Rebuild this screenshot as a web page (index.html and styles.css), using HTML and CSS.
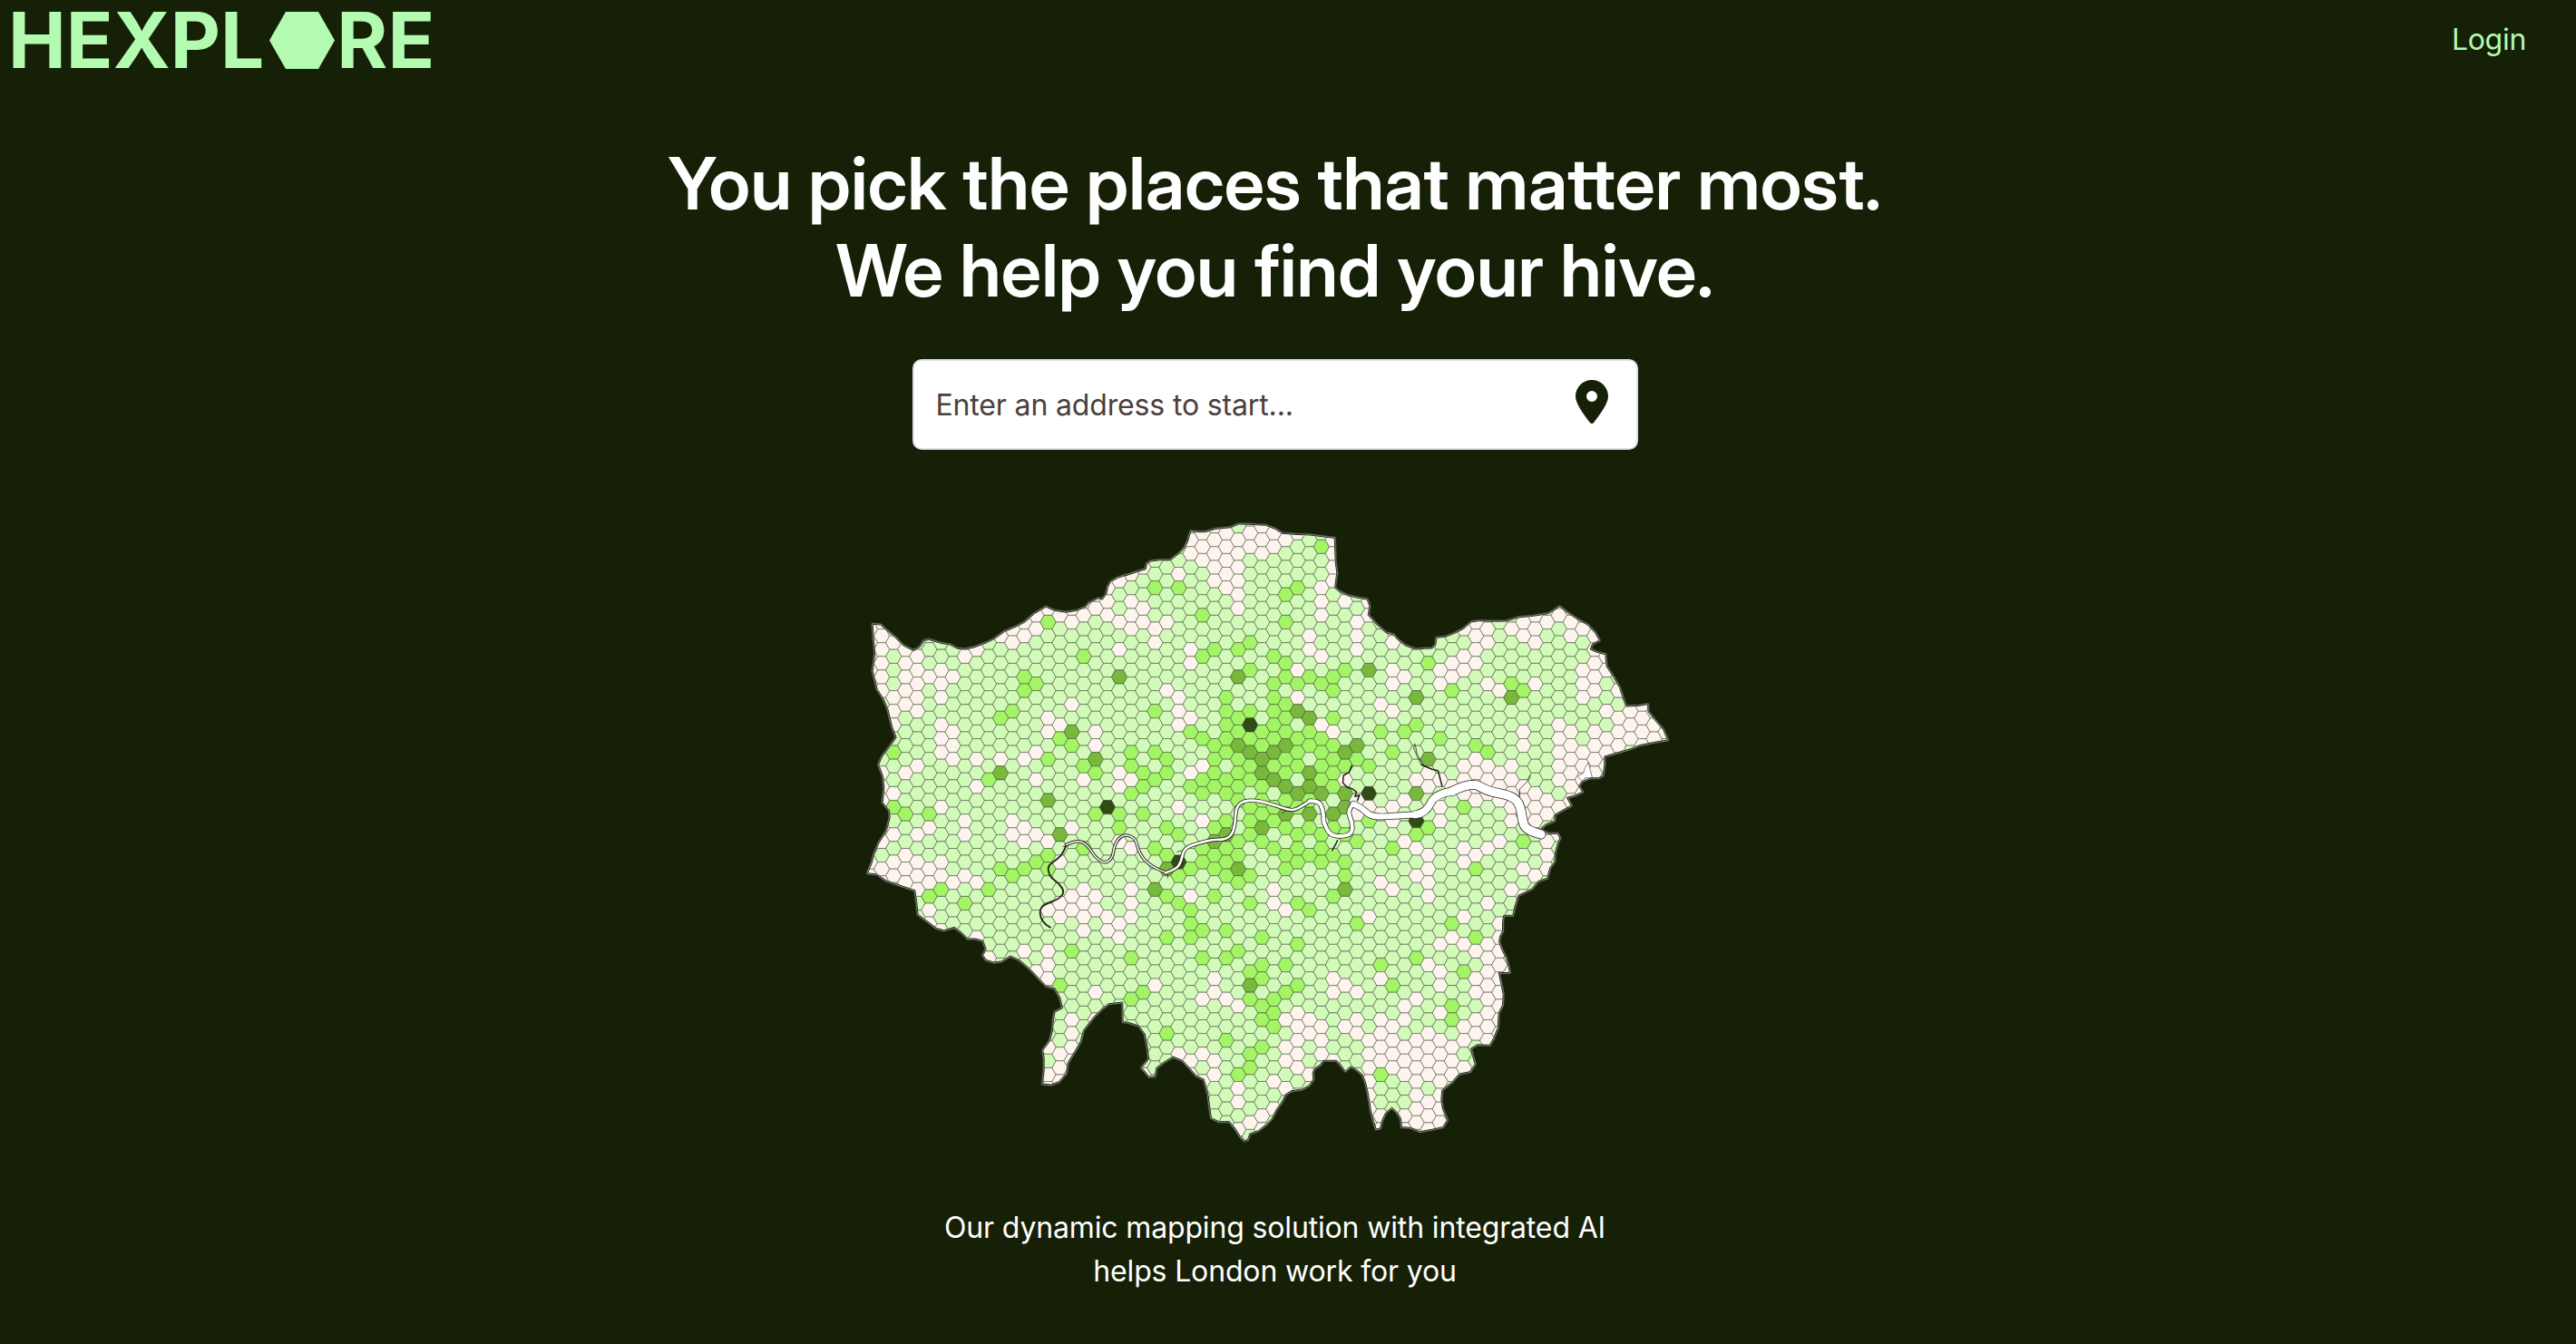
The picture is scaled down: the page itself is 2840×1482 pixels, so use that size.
FILE: index.html
```
<!DOCTYPE html>
<html lang="en">
<head>
<meta charset="utf-8">
<title>Hexplore</title>
<link rel="stylesheet" href="styles.css">
</head>
<body>
<header class="navbar">
  <a class="logo" aria-label="Hexplore"><span>HEXPL</span><svg class="logo-hex" viewBox="0 0 72 63"><path d="M18 0H54L72 31.5L54 63H18L0 31.5Z"/></svg><span>RE</span></a>
  <a class="login">Login</a>
</header>
<main class="hero">
  <h1 class="headline"><span>You pick the places that matter most.</span><span class="second">We help you find your hive.</span></h1>
  <div class="search">
    <span class="placeholder">Enter an address to start...</span>
    <svg class="pin" viewBox="0 0 36 48"><path fill-rule="evenodd" d="M18 0C8 0 0 8 0 18C0 26.5 11 40.500 15.800 46.900A2.800 2.800 0 0 0 20.200 46.900C25 40.500 36 26.500 36 18C36 8 28 0 18 0ZM18 12A6 6 0 1 1 18 24A6 6 0 1 1 18 12Z"/></svg>
  </div>
  <svg class="map" id="map" viewBox="950.5 560 910 710"></svg>
  <p class="tagline"><span>Our dynamic mapping solution with integrated AI</span><span class="second">helps London work for you</span></p>
</main>
<script src="map.js"></script>
</body>
</html>
```
FILE: styles.css
```
* { box-sizing: border-box; }
body {
  margin: 0;
  width: 2811px;
  height: 1482px;
  overflow: hidden;
  background: #162006;
  color: #fff;
  font-family: Inter, "Liberation Sans", sans-serif;
}
html { background: #162006; overflow: hidden; }
.navbar {
  display: flex;
  justify-content: space-between;
  align-items: center;
  height: 88px;
  padding: 0 26px 0 9px;
  color: #b2fbb1;
}
.logo {
  display: flex;
  align-items: center;
  font-size: 85.4px;
  line-height: 104px;
  font-weight: 700;
}
.logo-hex { width: 72px; height: 63px; margin: 0 2px 0 6px; fill: #b2fbb1; }
.login { font-size: 32px; line-height: 48px; letter-spacing: -.3px; }
.hero { display: flex; flex-direction: column; align-items: center; }
.headline {
  display: flex;
  flex-direction: column;
  align-items: center;
  margin: 66px 0 0;
  font-family: "Inter Display", Inter, "Liberation Sans", sans-serif;
  font-variation-settings: "opsz" 32;
  font-size: 80px;
  line-height: 96px;
  font-weight: 600;
  white-space: nowrap;
}
.search {
  display: flex;
  justify-content: space-between;
  align-items: center;
  width: 800px;
  height: 100px;
  margin-top: 50px;
  padding: 0 31px 0 24px;
  border: 2px solid #dee2e6;
  border-radius: 10px;
  background: #fff;
  color: #4a4040;
  font-size: 32px;
  letter-spacing: -.15px;
}
.pin { width: 36px; height: 48px; margin-bottom: 6px; fill: #162006; }
.map { width: 910px; height: 710px; margin-top: 64px; }
.tagline {
  display: flex;
  flex-direction: column;
  align-items: center;
  margin: 60px 0 0;
  font-size: 32px;
  line-height: 48px;
  letter-spacing: -.15px;
  white-space: nowrap;
}
.cell { stroke: #2c3a27; stroke-width: .85; stroke-opacity: .58; }
.coast { fill: #fef4ee; }
.halo { fill: none; stroke: #e9e9e2; stroke-opacity: .25; stroke-width: 3.6; stroke-linejoin: round; }
.edge { fill: none; stroke: #fff; stroke-opacity: .45; stroke-width: 1.8; stroke-linejoin: round; }
.shore { fill: none; stroke: #222820; stroke-width: 1; stroke-linejoin: round; }
.river, .bank, .creek, .brook { fill: none; stroke-linecap: round; stroke-linejoin: round; }
.river { stroke: #fff; }
.bank { stroke: #2a2424; }
.creek { stroke: #221b1b; stroke-width: 1.5; }
.brook { stroke: #221b1b; stroke-width: .9; stroke-opacity: .8; }
.marsh { fill: #fff; stroke: #555; stroke-width: .7; }
```
FILE: map.js
```
// Map sheets: origin of each sheet; sheet units are thirds of a map unit.
const SHEETS = { A: [940, 560], B: [1240, 560], C: [1540, 560], D: [940, 900], E: [1240, 900], F: [1540, 900], M: [1310, 740] };
const COLORS = { cream: '#fef4ee', pale: '#d2fab9', bright: '#a3f566', medium: '#78b93c', dark: '#2f4c14' };
const X0 = 958.5, DX = 13.1, DY = 15.12, Y0 = 572.6;

// Values per sheet: "column:y,y,y"
const DATA = [
['A','cream','55:400,446,536,582 95:378,423,469,514,559,605,877,922,968 134:400,446,627,672,718,945 173:469,514,560,605,650,877 213:491,536,582,627,673,855 252:559 291:536,582,627,718,763,809,990 331:559,741,786,832 370:491 409:469,832,922 488:423,832 527:400,446 566:423,378,832 606:355,400,809,900 645:333,695,741 684:355,718 724:333,378,650 763:310,355,900 802:290,333,741,786 841:265,310,355 881:245,378,469,877,922 920:219,310,355,400,900'],
['A','bright','134:809,990 173:1013 252:1013 448:900 488:695 527:673 566:559,605 606:582 645:378,832 684:764 724:786 763:491,855 802:877,1013 881:1013 920:809,855,945'],
['A','medium','881:559 724:741 802:832 488:877 645:968'],
['A','dark','841:990'],
['B','cream','20:219,310,355,401,900 59:197,333,378 99:401,446 138:378,605 177:219,627,673,718,990 217:106,151,469,514,696,877 256:83,129,174,854,1036 295:61,106,151,197,242 334:83,129,174,219,265 374:106,151,197,242,287,333 413:37,83,129 452:61,106,151 491:83,129 531:106 570:83,537,627 610:423,469 649:265,310,355,491,718 688:106,151,197,242,741 728:310 767:378,423,469 806:310,355 846:650 885:446,537,582,673,990,1036 924:560,968'],
['B','bright','20:809,855,945 59:877,922,1013 99:265,673,809,900 138:832,877,1058 177:265 217:741,922 256:355,491,764,900,945 295:469,786,832,877,922,1058 334:627,673,1036 374:469 413:446,537,673 491:491,582,627,673 531:287,378,514,560,650 570:265,582 610:560 649:129,582 688:560,605,696 728:537 806:854 846:741 885:809 924:741'],
['B','medium','374:560 806:537'],
['C','cream','102:877,922 142:537,582,900,990,1036 181:514,560,922 220:401,491,537,854,900,945 260:378,423,469,514,877,922,968 299:401,446,582,854,900,945 338:605,877,922,968 378:401,854,900,945,990,1036 417:378,423,741,786,922,968,1013 456:355,401,446,582,945,990,1036 496:333,378,968,1013 535:355,718,763,809,854,900,990 574:378,423,741,786,832,877,922,968 613:401,537,582,627,809,854,900,945 653:423,469,514,560,605,741,786,832,877 692:491,537,673,763,809,854 731:605,696,741,786 771:673,718,763 810:650,696,741,786 849:673,718,763 889:741 260:832 63:900'],
['C','bright','102:514 181:605 417:605 378:582 63:718 24:741 142:763 260:786 299:809 220:990'],
['C','medium','63:627,945 378:627 102:832'],
['C','dark','63:1036'],
['D','cream','55:151,197 95:38,84,175,220 134:61,152,197 173:129,175,220 213:61,152,197,242 252:38,175,220,311,356 291:152,197,379 331:220 370:15,61,197 409:220,401 448:469 527:15,61 566:38,84,447 606:61,515 645:84,311,447,492,538 684:152,288,333 724:38,265,311,674,719,764,810 763:242,288,333,379 802:265,311,583,674 841:333,379 881:84,356,401 920:106,242,288,333 645:764,855,900 684:787,832,878'],
['D','bright','173:-7 252:-7,265 291:242 370:288 448:242 488:175 527:197 566:175 606:152 645:129,175 763:106 724:447 684:560 802:-7 881:-7,38 920:469,605'],
['D','medium','684:61'],
['E','cream','20:106,243,288,333 59:855 99:560 217:265,810,855 177:787 256:16,606,787,878 295:538,583,810,855 334:606 374:628,900,946,1037 413:1014 452:991,1037 491:243,288,878,968 531:311,674,764,810,900 570:651,696,742,787,832 610:674,719,855 649:696,742,787 688:538,583,810 728:560,696 767:583,674,719 806:333,742,787,832,878,923,968 846:220,538,674,719,764,810,991,1037 885:16,243,696,742,787,832 924:84,628,674,764,810,855,991'],
['E','bright','20:469,606 59:583 99:106 138:38,129,265,402,719 177:61,197,288 217:175,311,356,402 256:106,152,379,469 295:38,129,175,265 334:16,106,152,197,379,469,742 374:84,129,220,447,855 413:197,288,515,606,787,832 452:402,492,538,628,674,764 491:606,651,696 531:129,175,492,583 570:106,152,288,424,560 610:129,311 649:106,152 688:129,265 728:152,197 767:84,356 846:492,855 885:106,560'],
['E','medium','99:243 138:175 295:84 334:61 374:175 413:560 452:38 728:243'],
['E','dark','177:152'],
['F','cream','24:84,628,674,764,810,855,991,1037 63:106,197,606,742,787,832,878,923,968,1014 102:129,175,220,265,492,719,764,810,855,946,991,1037 142:16,424,515,560,651,742,787,832,878,923,968,1014 181:402,764,810,855 220:106,152,333,424,696,742,832 260:129,447,538,583,674,719 299:106,288,424,469,515,560,606,651,696,742 338:84,356,402,447,492,538,583,628,674,719 378:16,243,515 417:175,265 456:197 496:84,129,175 535:61'],
['F','bright','63:61,469 102:38 181:356,628,674 220:515 260:175,402 417:84'],
['M','bright','6:201,382 46:223,360,405 85:246,292,337,382,518 124:87,133,178,223,269,360,405,496,587 164:155,201,292,337,382,428,564,609 203:-3,133,223,314,360,450,496,541 242:201,246,382,428,473,564 282:42,87,133,178,223,314,450,496,587 321:19,110,155,201,292,337,428,518,609 360:42,223,269,314,450,541,587,632 400:19,201,246,428,518,609 439:42,223,269,314,360,541,587,632 478:19,65,155,246,292,337,382,518,609 517:-3,314,541,632 557:292,564 596:314,496 635:201'],
['M','medium','85:564 124:541 164:19,246 242:292,337,518 203:269 282:269,360 321:246,382,473 360:133,405 400:155,337,382,473 439:405 478:473 517:269,405,450 557:246 596:-3'],
['M','cream','6:155,337 46:314,496 360:-3,87 439:178 478:201 517:360 557:428,473 596:450 635:110,473'],
['M','dark','203:178 596:405']
];

const COAST = [
['A','65,385 90,387 110,405 140,430 165,455 200,473 222,460 235,440 250,436 290,448 320,453 345,466 370,468 400,462 440,447 470,432 500,410 540,393 570,377 600,350 638,328 665,340 705,346 740,340 770,328 780,315 810,300 825,303 838,285 843,262 852,245 875,232 905,222'],
['B','0,225 30,215 68,203 72,185 85,177 115,173 150,173 180,150 195,135 208,110 213,90 218,77 240,80 265,80 300,70 350,65 375,54 410,55 465,58 495,70 520,85 560,88 610,90 665,97 692,100 695,180 700,215 693,265 705,275 735,290 765,297 800,303 808,325 803,355 830,385 862,413 888,420'],
['C','0,435 25,455 60,468 90,466 115,465 127,455 130,430 160,427 190,415 220,400 245,378 270,374 320,376 360,375 400,363 450,358 500,350 520,338 537,327 560,345 590,365 630,388 655,415 668,438 645,450 638,468 660,478 688,485 692,525 715,560 735,595 750,640 757,657 800,655 828,650 830,675 850,700 880,735 894,768 850,775 800,785 770,797 720,812 685,822 685,850 680,885 665,893 640,893 610,905 600,920 612,940 585,952 560,958 575,985 550,998 520,1015 520,1035 490,1047 475,1060'],
['F','480,48 500,58 530,58 538,72 530,90 522,120 520,150 505,170 495,205 465,215 445,240 400,262 388,300 382,328 352,328 348,350 348,380 340,395 336,415 345,440 360,470 368,500 372,517 335,518 342,550 350,590 348,625 335,650 332,700 318,735 305,757 265,755 243,768 248,790 257,820 240,845 205,852 180,880 148,905 145,940 150,970 165,1005 150,1028 115,1036 75,1043 45,1030 15,1028'],
['E','912,1000 900,980 882,963 862,980 850,1005 843,1032 830,1035 822,1010 812,970 803,915 795,880 785,855 760,833 745,828 728,843 715,825 700,808 655,808 645,822 625,835 620,850 622,870 608,890 585,903 550,908 530,920 518,945 500,970 485,1000 465,1020 440,1040 412,1050 405,1070 393,1073 380,1058 362,1030 345,1010 310,1010 285,998 280,965 275,925 268,895 260,870 235,858 215,835 190,808 158,795 125,815 103,832 98,860 80,862 55,832 78,805 75,770 65,720 45,693 10,682'],
['D','893,680 892,615 845,620 820,640 795,665 762,708 752,745 735,775 710,815 705,850 680,878 655,888 627,885 632,840 632,800 628,775 650,745 660,710 663,670 668,648 693,635 685,600 668,570 640,562 615,537 585,505 550,475 520,462 490,480 465,483 440,475 430,460 440,440 430,412 405,405 380,405 360,385 335,367 300,377 275,370 250,350 215,325 210,280 205,245 165,232 110,213 80,192 48,188 62,155 70,125 85,90 110,50 122,5'],
['A','120,1000 98,975 103,930 100,890 85,850 95,825 125,785 143,760 130,725 115,665 100,630 80,600 65,540 73,480 68,430']
];

// Thames reaches: [white width, bank width, parts]
const RIVER = [
[0, 1.9, [['D','652,368 628,355 615,315 630,292 680,275 700,250 680,222 650,200 643,165 665,150 695,125 705,95']]],
[1.5, 3.5, [['D','705,95 740,77 775,95 800,135 830,157 858,140 863,100 880,70'],['E','5,60 35,75 45,120 80,165 135,187']]],
[2.6, 4.4, [['E','135,187 170,175 185,150 195,105 240,90 290,77 330,78 355,60 364,20'],['B','364,1020 370,985 395,968 440,968 500,985 550,1003 580,990 610,970']]],
[4, 5.5, [['B','610,970 640,968 655,1000 657,1040'],['E','657,20 675,60 710,68 750,60 752,20'],['B','734,1000 755,980']]],
[6.2, 7.6, [['B','755,980 780,990 810,1020 860,1022'],['C','0,1018 60,1015']]],
[8, 9.4, [['C','60,1015 95,1010 125,945 180,938']]],
[9.5, 11, [['C','180,938 245,905 300,938 370,950 405,975 415,1040'],['F','425,40 455,55 475,60']]]
];
const CREEKS = [
['B','750,852 740,875 722,885 720,910 735,925 752,930 765,940 760,955 775,950 768,968'],
['C','80,850 115,865 135,870 148,920'],
['E','702,80 695,95 685,113']
];
const BROOKS = [
['C','440,885 435,900 405,930 405,960'],
['C','58,780 54,795 70,830 78,850 85,850 65,815 60,785'],
['E','172,118 187,114'], ['E','140,188 141,205'],
['B','520,1010 530,1002'], ['D','695,100 712,98']
];

const points = (sheet, text) => text.trim().split(/\s+/).map(p => {
  const [x, y] = p.split(',').map(Number);
  return [SHEETS[sheet][0] + x / 3, SHEETS[sheet][1] + y / 3];
});
const line = pts => 'M' + pts.map(p => p[0].toFixed(1) + ' ' + p[1].toFixed(1)).join('L');
// Rounded line through the midpoints of the given points
const smooth = pts => {
  let d = 'M' + pts[0].join(' ');
  for (let i = 1; i < pts.length - 1; i++) {
    const a = pts[i], b = pts[i + 1];
    const end = i === pts.length - 2 ? b : [(a[0] + b[0]) / 2, (a[1] + b[1]) / 2];
    d += 'Q' + a.join(' ') + ' ' + end.join(' ');
  }
  return pts.length < 3 ? line(pts) : d;
};
const join = parts => parts.flatMap(([s, t]) => points(s, t));

const cells = {};
for (const [sheet, level, text] of DATA) {
  for (const col of text.split(' ')) {
    const [cx, ys] = col.split(':');
    const i = Math.round((SHEETS[sheet][0] + cx / 3 - X0) / DX);
    for (const cy of ys.split(',')) {
      const y = SHEETS[sheet][1] + cy / 3;
      const j = Math.round((y - Y0 - (i % 2 ? DY / 2 : 0)) / DY);
      cells[i + ',' + j] = level;
    }
  }
}

let svg = '';
const coast = line(join(COAST)) + 'Z';
svg += `<clipPath id="land"><path d="${coast}"/></clipPath><path class="halo" d="${coast}"/><path class="coast" d="${coast}"/><g clip-path="url(#land)">`;
for (let i = -1; i < 69; i++) {
  for (let j = -2; j < 47; j++) {
    const x = X0 + i * DX, y = Y0 + (Math.abs(i % 2) ? DY / 2 : 0) + j * DY;
    const r = DX / 1.5, h = DY / 2;
    const pts = [[x - r, y], [x - r / 2, y - h], [x + r / 2, y - h], [x + r, y], [x + r / 2, y + h], [x - r / 2, y + h]];
    svg += `<path class="cell" fill="${COLORS[cells[i + ',' + j] || 'pale']}" d="${line(pts)}Z"/>`;
  }
}
svg += `<path class="marsh" d="${line(points('C', '597,888 615,878 620,862 632,842 645,893 620,893 612,905'))}Z"/>`;
svg += `</g><path class="edge" d="${coast}"/><path class="shore" d="${coast}"/>`;
const reaches = RIVER.map(([w, b, parts]) => [w, b, smooth(join(parts))]);
CREEKS.forEach(([s, t]) => { svg += `<path class="creek" d="${line(points(s, t))}"/>`; });
BROOKS.forEach(([s, t]) => { svg += `<path class="brook" d="${line(points(s, t))}"/>`; });
reaches.forEach(([w, b, d]) => { svg += `<path class="bank" stroke-width="${b}" d="${d}"/>`; });
reaches.forEach(([w, b, d]) => { if (w) svg += `<path class="river" stroke-width="${w}" d="${d}"/>`; });
document.getElementById('map').innerHTML = svg;
```
